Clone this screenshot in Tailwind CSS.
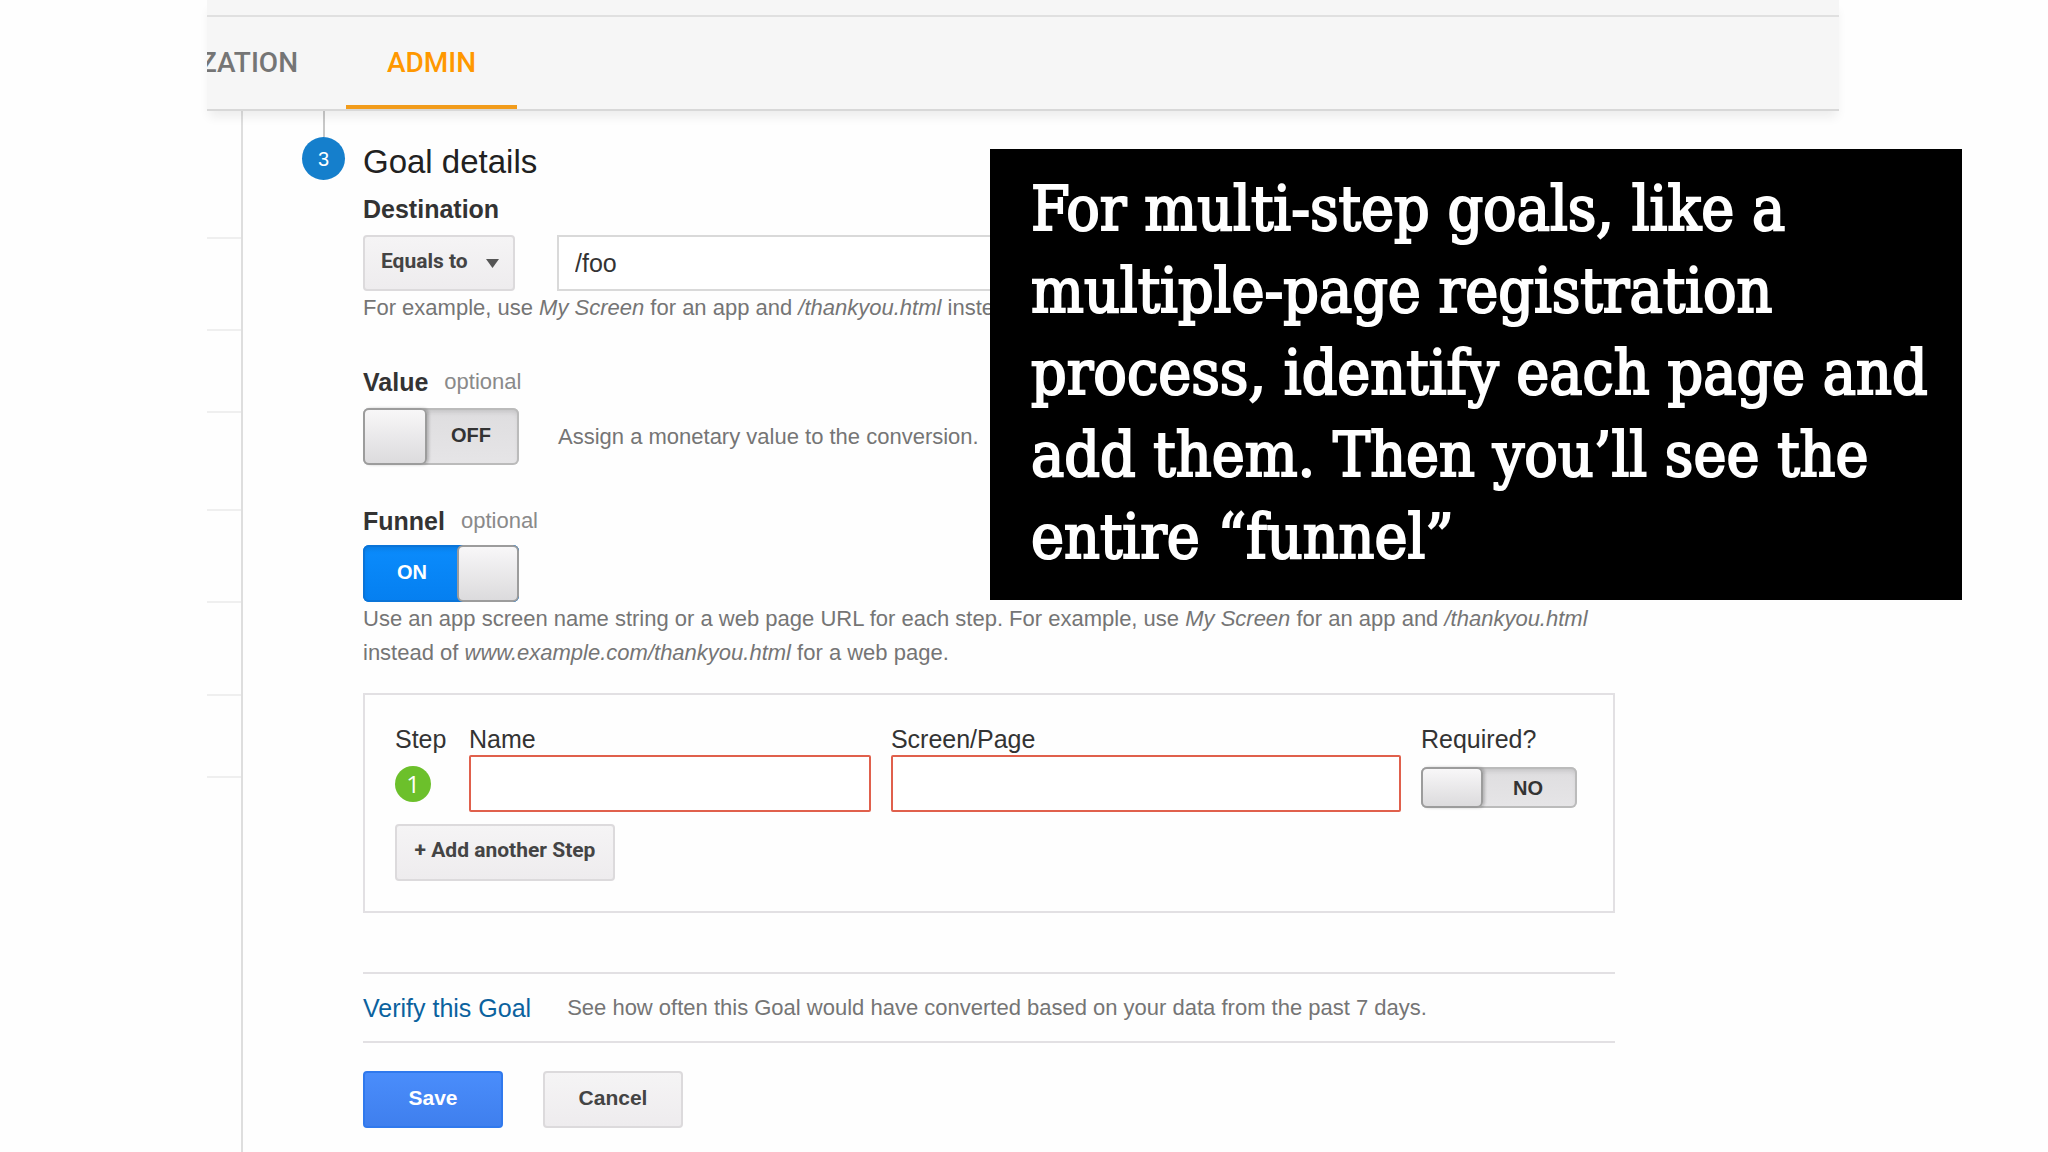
<!DOCTYPE html>
<html lang="en">

<head>
  <meta charset="UTF-8">
  <meta name="viewport" content="width=device-width, initial-scale=1.0">
  <title>Goal details</title>
  <script src="https://cdn.jsdelivr.net/npm/@tailwindcss/browser@4"></script>
</head>

<body class="relative min-h-screen bg-[#fefefe] pr-[209px] pl-[207px] font-['Liberation_Sans',Arial,sans-serif] text-[#333]">
  <div class="flex min-h-screen flex-col">
    <header class="relative border-b-2 border-[#d8d8d8] bg-[#f6f6f6] shadow-[0_8px_10px_-2px_rgba(0,0,0,0.07)]">
      <div class="h-[15px]"></div>
      <nav class="flex h-[94px] border-t-2 border-[#e0e0e0] font-[Roboto,sans-serif] text-[28px] font-medium">
        <a href="#" class="flex w-[139px] items-center justify-end overflow-hidden pr-[48px] text-[#757575]">CUSTOMIZATION</a>
        <a href="#" class="flex w-[171px] items-center justify-center border-b-4 border-[#f29c1b] pt-1 text-[#ff9800]">ADMIN</a>
      </nav>
    </header>

    <div class="flex grow">
      <!-- Left list, only its right edge is visible -->
      <aside class="w-[36px] shrink-0 border-r-2 border-[#dedede]">
        <div class="h-[128px] border-b-2 border-[#efefef]"></div>
        <div class="h-[92px] border-b-2 border-[#efefef]"></div>
        <div class="h-[82px] border-b-2 border-[#efefef]"></div>
        <div class="h-[98px] border-b-2 border-[#efefef]"></div>
        <div class="h-[92px] border-b-2 border-[#efefef]"></div>
        <div class="h-[93px] border-b-2 border-[#efefef]"></div>
        <div class="h-[82px] border-b-2 border-[#efefef]"></div>
      </aside>

      <main class="flex grow gap-[18px] pr-56 pl-[59px]">
        <div class="flex w-[43px] shrink-0 flex-col items-center">
          <div class="h-[26px] w-[2px] bg-[#c8c8c8]"></div>
          <div class="flex size-[43px] items-center justify-center rounded-full bg-[#157fcc] text-[20px] text-white">3</div>
        </div>

        <form class="grow pt-[31px]">
          <h1 class="text-[33px] leading-[40px] text-[#212121]">Goal details</h1>

          <label for="destination" class="mt-[11px] block text-[25px] leading-[32px] font-bold">Destination</label>
          <div class="mt-[10px] flex gap-[42px]">
            <div class="relative w-[152px] shrink-0">
              <select aria-label="Match type" class="h-14 w-full appearance-none rounded-sm border-2 border-[#dcdadc] bg-linear-to-b from-[#f5f4f5] to-[#eeecee] pb-0.5 pl-4 font-[Roboto,sans-serif] text-[21px] font-bold text-[#444]">
                <option>Equals to</option>
                <option>Begins with</option>
                <option>Regular expression</option>
              </select>
              <svg class="pointer-events-none absolute top-6 right-4 h-[9px] w-[13px]" viewBox="0 0 13 9" fill="#555"><path d="M0 0h13L6.500 9z" /></svg>
            </div>
            <input type="text" id="destination" value="/foo" class="h-14 w-[700px] border-2 border-[#d9d9d9] bg-white px-4 text-[25px]">
          </div>
          <p class="text-[22px] leading-[34px] text-[#757575]">For example, use <em>My Screen</em> for an app and <em>/thankyou.html</em> instead of <em>www.example.com/thankyou.html</em></p>

          <div class="mt-[41px] flex items-center gap-4">
            <label for="value" class="text-[25px] leading-[32px] font-bold">Value</label>
            <span class="text-[22px] leading-[32px] text-[#8a8a8a]">optional</span>
          </div>
          <div class="mt-[10px] flex items-center gap-[39px]">
            <label class="flex h-[57px] w-[156px] rounded-md bg-linear-to-b from-[#dedddf] to-[#e6e5e7] text-[20px] font-bold shadow-[inset_0_0_0_2px_#bbb,inset_0_4px_5px_rgba(0,0,0,0.12)]">
              <input type="checkbox" id="value" class="sr-only">
              <span class="w-[64px] rounded-md border-2 border-[#9c9c9c] bg-linear-to-b from-[#f8f7f8] to-[#dcdbdd] shadow-[2px_0_3px_rgba(0,0,0,0.2)]"></span>
              <span class="flex grow items-center justify-center pr-1 pb-1">OFF</span>
            </label>
            <p class="text-[22px] leading-[34px] text-[#757575]">Assign a monetary value to the conversion.</p>
          </div>

          <div class="mt-10 flex items-center gap-4">
            <label for="funnel" class="text-[25px] leading-[32px] font-bold">Funnel</label>
            <span class="text-[22px] leading-[32px] text-[#8a8a8a]">optional</span>
          </div>
          <label class="mt-[8px] flex h-[57px] w-[156px] rounded-md bg-linear-to-b from-[#0b8cfd] to-[#057ff0] text-[20px] font-bold text-white shadow-[inset_0_0_0_2px_#0a74d8,inset_0_4px_5px_rgba(0,0,0,0.12)]">
            <input type="checkbox" id="funnel" class="sr-only" checked>
            <span class="flex grow items-center justify-center pb-1 pl-1">ON</span>
            <span class="w-[62px] rounded-md border-2 border-[#9c9c9c] bg-linear-to-b from-[#f8f7f8] to-[#dcdbdd]"></span>
          </label>
          <p class="text-[22px] leading-[34px] text-[#757575]">Use an app screen name string or a web page URL for each step. For example, use <em>My Screen</em> for an app and <em>/thankyou.html</em> instead of <em>www.example.com/thankyou.html</em> for a web page.</p>

          <section class="mt-[23px] border-2 border-[#e2e0e3] pt-7 pr-9 pb-[30px] pl-[30px]">
            <div class="grid grid-cols-[54px_401fr_509fr_156px] gap-x-5 text-[25px] leading-[32px]">
              <span>Step</span>
              <label for="step-name">Name</label>
              <label for="step-page">Screen/Page</label>
              <label for="step-required">Required?</label>

              <span class="flex size-9 items-center justify-center self-center rounded-full bg-[#6cc02b] font-['Open_Sans',sans-serif] text-[24px] text-white">1</span>
              <input type="text" id="step-name" class="h-[57px] min-w-0 rounded-xs border-2 border-[#e0604c] bg-white px-4">
              <input type="text" id="step-page" class="h-[57px] min-w-0 rounded-xs border-2 border-[#e0604c] bg-white px-4">
              <label class="mt-3 flex h-[41px] rounded-md bg-linear-to-b from-[#dedddf] to-[#e6e5e7] text-[20px] font-bold shadow-[inset_0_0_0_2px_#bbb,inset_0_4px_5px_rgba(0,0,0,0.12)]">
                <input type="checkbox" id="step-required" class="sr-only">
                <span class="w-[62px] rounded-md border-2 border-[#9c9c9c] bg-linear-to-b from-[#f8f7f8] to-[#dcdbdd] shadow-[2px_0_3px_rgba(0,0,0,0.2)]"></span>
                <span class="flex grow items-center justify-center pr-1">NO</span>
              </label>
            </div>
            <button type="button" class="mt-3 h-[57px] w-[220px] rounded-sm border-2 border-[#dcdadc] bg-linear-to-b from-[#f5f4f5] to-[#eeecee] pb-1 font-[Roboto,sans-serif] text-[21px] font-bold text-[#444]">+ Add another Step</button>
          </section>

          <div class="mt-[59px] flex h-[71px] items-center gap-9 border-y-2 border-[#e2e0e3]">
            <a href="#" class="text-[25px] leading-[34px] text-[#0b629e]">Verify this Goal</a>
            <p class="text-[22px] leading-[34px] text-[#757575]">See how often this Goal would have converted based on your data from the past 7 days.</p>
          </div>

          <div class="mt-7 flex gap-10">
            <button type="submit" class="h-[57px] w-[140px] rounded-sm border-2 border-[#3079ed] bg-linear-to-b from-[#4a8dfb] to-[#3f7fee] pb-1 text-[21px] font-bold text-white">Save</button>
            <button type="button" class="h-[57px] w-[140px] rounded-sm border-2 border-[#dcdadc] bg-linear-to-b from-[#f5f4f5] to-[#eeecee] pb-1 text-[21px] font-bold text-[#444]">Cancel</button>
          </div>
        </form>
      </main>
    </div>
  </div>

  <!-- Caption over the page -->
  <aside class="absolute top-[149px] right-[86px] w-[972px] bg-black px-[41px] pt-[19px] pb-[22px] font-['DejaVu_Serif_Condensed','DejaVu_Serif',serif] text-[62px] leading-[82px] whitespace-nowrap text-white [-webkit-text-stroke:2px_white]">
    For multi-step goals, like a<br>
    multiple-page registration<br>
    process, identify each page and<br>
    add them. Then you’ll see the<br>
    entire “funnel”
  </aside>
</body>

</html>
